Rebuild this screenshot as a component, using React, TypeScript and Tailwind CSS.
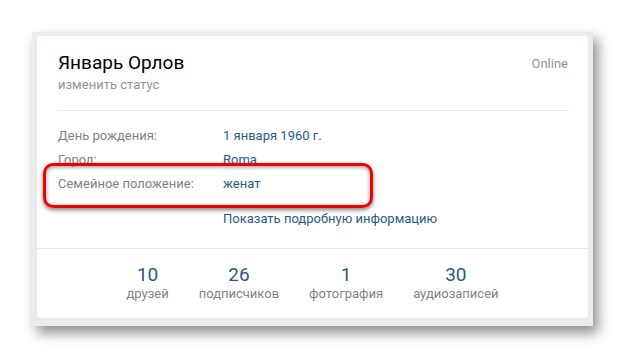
const INFO_ROWS: { label: string; value: string }[] = [
  { label: "День рождения:", value: "1 января 1960 г." },
  { label: "Город:", value: "Roma" },
  { label: "Семейное положение:", value: "женат" },
];

const COUNTERS: { count: string; label: string }[] = [
  { count: "10", label: "друзей" },
  { count: "26", label: "подписчиков" },
  { count: "1", label: "фотография" },
  { count: "30", label: "аудиозаписей" },
];

export default function App() {
  return (
    <div className="min-h-[357px] w-[626px] bg-white pl-[32px] pt-[32px] font-['Roboto',sans-serif]">
      <div className="w-[561px] bg-[#eaebee] px-[5px] pb-[8px] pt-[4px] shadow-[5px_7px_12px_rgba(0,0,0,0.45)]">
        <div className="relative rounded-[4px] bg-white">
          <div className="pl-[21px] pr-[20px] pt-[15px]">
            <div className="flex items-start justify-between">
              <div>
                <div className="text-[19px] leading-[24px] text-[#000]">Январь Орлов</div>
                <div className="mt-[2px] text-[13px] leading-[16px] text-[#939393]">
                  изменить статус
                </div>
              </div>
              <div className="mt-[5px] text-[13px] leading-[16px] text-[#939393]">Online</div>
            </div>
            <div className="mr-[-1px] mt-[17px] h-px bg-[#e7e8ec]" />
            <div className="pt-[13px]">
              {INFO_ROWS.map((row) => (
                <div key={row.label} className="flex text-[13px] leading-[24px]">
                  <div className="w-[165px] text-[#828282]">{row.label}</div>
                  <div className="text-[#2a5885]">{row.value}</div>
                </div>
              ))}
              <div className="mt-[11px] pl-[165px] text-[13px] leading-[24px] text-[#2a5885]">
                Показать подробную информацию
              </div>
            </div>
          </div>
          <div className="mt-[17px] flex justify-center border-t border-[#e7e8ec] pb-[16px] pt-[15px]">
            {COUNTERS.map((c) => (
              <div key={c.label} className="flex flex-col items-center px-[15px]">
                <div className="text-[19px] leading-[22px] text-[#2a5885]">{c.count}</div>
                <div className="text-[13px] leading-[16px] text-[#828282]">{c.label}</div>
              </div>
            ))}
          </div>
          <div className="absolute left-[6px] top-[127px] h-[45px] w-[330px] rounded-[10px] border-[3px] border-[#f00000] shadow-[0_2px_4px_rgba(0,0,0,0.5),inset_0_1px_4px_rgba(0,0,0,0.45)]" />
        </div>
      </div>
    </div>
  );
}
